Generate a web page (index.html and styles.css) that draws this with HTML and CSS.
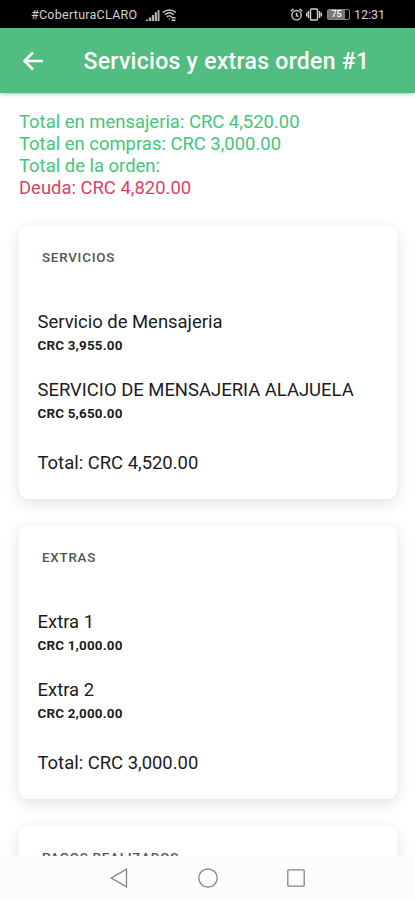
FILE: index.html
```html
<!DOCTYPE html>
<html lang="es">
<head>
<meta charset="utf-8">
<title>Servicios y extras</title>
<link rel="stylesheet" href="styles.css">
</head>
<body>
<div class="phone">
  <div class="status">
    <span class="carrier">#CoberturaCLARO</span>
    <svg class="signal" width="14" height="12" viewBox="0 0 14 12"><path d="M0 12v-1.500h2.200V12zM2.900 12V8.500h2.200V12zM5.800 12V6H8v6zM8.700 12V3.300h2.200V12zM11.600 12V1h1.900v11z"/></svg>
    <svg class="wifi" width="15" height="12" viewBox="0 0 15 12"><path d="M.8 3.500C4.500.2 10 .2 13.800 3.500M2.800 5.700c3-2.400 6.300-2.400 9 0M4.800 7.900c1.700-1.300 3.600-1.300 5 0M6.800 10h1M9.500 8.800h4M9.500 11.200h4"/></svg>
    <svg class="alarm" width="13" height="13" viewBox="0 0 13 13"><circle cx="6.500" cy="7.200" r="4.700"/><path d="M.7 3.200 3.500.9M12.300 3.200 9.500.9M6.500 4.700v2.800l2 1.200"/></svg>
    <svg class="vibrate" width="16" height="13" viewBox="0 0 16 13"><rect x="4.500" y="1" width="7" height="11" rx="1"/><path d="M2.500 3v7M13.500 3v7M.7 4.500v4M15.300 4.500v4"/></svg>
    <span class="battery"><span class="level">75</span></span>
    <span class="clock">12:31</span>
  </div>
  <header class="toolbar">
    <svg class="back" width="22" height="20" viewBox="0 0 22 20"><path d="M11 1.500 2.500 10l8.500 8.500M2.500 10H21"/></svg>
    <h1>Servicios y extras orden #1</h1>
  </header>
  <main class="content">
    <div class="summary">
      <div>Total en mensajeria: CRC 4,520.00</div>
      <div>Total en compras: CRC 3,000.00</div>
      <div>Total de la orden:</div>
      <div class="debt">Deuda: CRC 4,820.00</div>
    </div>
    <section class="card">
      <h2>SERVICIOS</h2>
      <div class="item"><div class="name">Servicio de Mensajeria</div><div class="price">CRC 3,955.00</div></div>
      <div class="item"><div class="name">SERVICIO DE MENSAJERIA ALAJUELA</div><div class="price">CRC 5,650.00</div></div>
      <div class="total">Total: CRC 4,520.00</div>
    </section>
    <section class="card">
      <h2>EXTRAS</h2>
      <div class="item"><div class="name">Extra 1</div><div class="price">CRC 1,000.00</div></div>
      <div class="item"><div class="name">Extra 2</div><div class="price">CRC 2,000.00</div></div>
      <div class="total">Total: CRC 3,000.00</div>
    </section>
    <section class="card">
      <h2>PAGOS REALIZADOS</h2>
    </section>
  </main>
  <nav class="nav">
    <svg width="18" height="20" viewBox="0 0 18 20"><path d="M16.500 1.200v17.600L1.300 10z"/></svg>
    <svg width="20" height="20" viewBox="0 0 20 20"><circle cx="10" cy="10" r="9.200"/></svg>
    <svg width="18" height="18" viewBox="0 0 18 18"><rect x=".8" y=".8" width="16.400" height="16.400" rx="1"/></svg>
  </nav>
</div>
</body>
</html>
```
FILE: styles.css
```css
* { box-sizing: border-box; }
body { margin: 0; font-family: Roboto, "Liberation Sans", sans-serif; background: #fff; }
h1, h2 { margin: 0; }
svg { fill: none; flex: none; }
.phone { width: 415px; height: 900px; display: flex; flex-direction: column; overflow: hidden; }
.status { height: 28px; flex: none; background: #000; color: #d0d0d0; display: flex; align-items: center; padding: 1px 30px 0 31px; font-size: 12.5px; white-space: nowrap; }
.carrier { width: 108px; letter-spacing: .27px; }
.signal { margin-left: 7px; fill: #b4b4b4; }
.wifi { margin-left: 2px; stroke: #c4c4c4; stroke-width: 1.4; }
.alarm { margin-left: auto; stroke: #d0d0d0; stroke-width: 1.4; }
.vibrate { margin-left: 3px; stroke: #d0d0d0; stroke-width: 1.4; }
.battery { margin-left: 5px; width: 23px; height: 11px; border: 1px solid #888; border-radius: 2px; display: flex; }
.level { width: 17px; background: #777; color: #fff; font-size: 9px; line-height: 9px; text-align: center; font-weight: 500; }
.clock { margin-left: 4px; width: 31px; }
.toolbar { height: 65px; flex: none; background: #52bd80; color: #fff; display: flex; align-items: center; padding: 1px 0 0 22px; box-shadow: 0 1px 4px rgba(0,0,0,.28); z-index: 1; }
.back { stroke: #fff; stroke-width: 2.500; }
h1 { margin: 1px 0 0 39.500px; font-size: 23px; font-weight: 500; letter-spacing: .28px; white-space: nowrap; }
.content { flex: 1; min-height: 0; overflow: hidden; padding: 18px 18px 0 19px; }
.summary { font-size: 18.450px; line-height: 22px; color: #45c67b; white-space: nowrap; }
.debt { color: #d9455f; }
.card { height: 273px; margin-top: 27px; border-radius: 9px; background: #fff; padding: 22px 18px 0 18.500px; box-shadow: 0 4px 16px rgba(0,0,0,.12); white-space: nowrap; }
h2 { margin: 0 0 42px 4.500px; font-size: 13.400px; line-height: 20px; font-weight: 500; letter-spacing: .75px; color: #555; }
.item { height: 68px; color: #1c1c1c; }
.name { font-size: 18.450px; line-height: 24px; }
.price { font-size: 13.400px; line-height: 24px; font-weight: 700; letter-spacing: .2px; }
.total { margin-top: 5px; font-size: 18.450px; line-height: 24px; color: #1c1c1c; }
.nav { height: 44px; flex: none; background: #fcfcfc; display: flex; align-items: center; padding-left: 110px; gap: 69.500px; z-index: 1; }
.nav svg { stroke: #858585; stroke-width: 1.300; }
```
